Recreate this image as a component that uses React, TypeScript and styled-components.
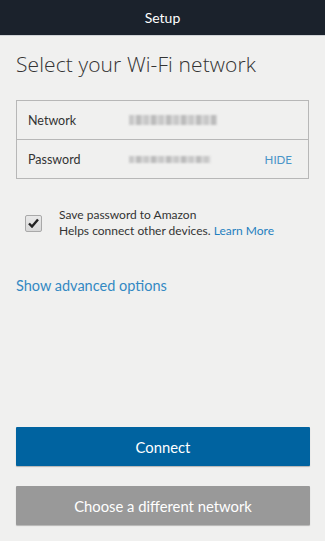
import React from 'react';
import styled, { createGlobalStyle } from 'styled-components';

const GlobalStyle = createGlobalStyle`
  html, body {
    margin: 0;
    padding: 0;
    background: #f0f0ef;
  }
  body {
    font-family: Lato, 'Open Sans', Arial, sans-serif;
    color: #333;
  }
`;

const Screen = styled.div`
  width: 325px;
  height: 541px;
  display: flex;
  flex-direction: column;
  background: #f0f0ef;
  overflow: hidden;
`;

const Header = styled.header`
  height: 35px;
  background: #1b222c;
  border-bottom: 1px solid #cfd2d6;
  display: flex;
  align-items: center;
  justify-content: center;
  color: #fff;
  font-size: 14px;
`;

const Content = styled.main`
  flex: 1;
  display: flex;
  flex-direction: column;
  padding: 0 16px 0 16px;
`;

const Title = styled.h1`
  margin: 14px 0 0;
  font-family: 'Open Sans', Lato, sans-serif;
  font-size: 21px;
  font-weight: 300;
  color: #333;
  letter-spacing: 0.1px;
`;

const Fields = styled.div`
  margin-top: 22px;
  border: 1px solid #b7b7b7;
  width: 293px;
  box-sizing: border-box;
`;

const FieldRow = styled.div<{ $last?: boolean }>`
  height: 38px;
  display: flex;
  align-items: center;
  padding: 0 16px 0 11px;
  border-bottom: ${(p) => (p.$last ? 'none' : '1px solid #b7b7b7')};
  font-size: 12.5px;
`;

const Label = styled.span`
  width: 101px;
  color: #333;
`;

const Masked = styled.span<{ $w: number; $h: number }>`
  width: ${(p) => p.$w}px;
  height: ${(p) => p.$h}px;
  background: repeating-linear-gradient(90deg, #c8c8c8 0 5px, #e2e2e2 5px 7px, #bcbcbc 7px 12px, #d6d6d6 12px 15px);
  filter: blur(0.8px);
`;

const Spacer = styled.span`
  flex: 1;
`;

const TextButton = styled.span`
  color: #4a95c8;
  font-size: 11.5px;
`;

const SaveRow = styled.label`
  margin-top: 28px;
  display: flex;
  align-items: center;
  gap: 17px;
  padding-left: 9px;
  font-size: 12px;
  line-height: 16px;
  color: #333;
`;

const Box = styled.span`
  width: 15px;
  height: 15px;
  border: 1px solid #a9a9a9;
  border-radius: 2px;
  background: linear-gradient(#e9e9e9, #d8d8d8);
  display: flex;
  align-items: center;
  justify-content: center;
`;

const Link = styled.a`
  color: #1f7fbf;
  text-decoration: none;
`;

const Advanced = styled.a`
  margin-top: 38px;
  color: #3389c3;
  font-size: 14.5px;
  text-decoration: none;
`;

const Buttons = styled.div`
  margin-top: auto;
  margin-bottom: 16px;
  display: flex;
  flex-direction: column;
  gap: 20px;
`;

const Button = styled.button<{ $primary?: boolean }>`
  width: 294px;
  height: 39px;
  border: none;
  border-radius: 1px;
  font-family: inherit;
  font-size: 14.8px;
  color: #fff;
  background: ${(p) => (p.$primary ? '#0063a0' : '#999999')};
  box-shadow: 0 1px 1px rgba(0, 0, 0, 0.25);
`;

export default function App() {
  return (
    <Screen>
      <GlobalStyle />
      <Header>Setup</Header>
      <Content>
        <Title>Select your Wi-Fi network</Title>
        <Fields>
          <FieldRow>
            <Label>Network</Label>
            <Masked $w={88} $h={10} />
          </FieldRow>
          <FieldRow $last>
            <Label>Password</Label>
            <Masked $w={82} $h={7} />
            <Spacer />
            <TextButton>HIDE</TextButton>
          </FieldRow>
        </Fields>
        <SaveRow>
          <Box>
            <svg width="11" height="10" viewBox="0 0 11 10">
              <path d="M1 5.5 L4 8.5 L10 1.5" fill="none" stroke="#222" strokeWidth="2.4" />
            </svg>
          </Box>
          <span>
            Save password to Amazon
            <br />
            Helps connect other devices. <Link>Learn More</Link>
          </span>
        </SaveRow>
        <Advanced>Show advanced options</Advanced>
        <Buttons>
          <Button $primary>Connect</Button>
          <Button>Choose a different network</Button>
        </Buttons>
      </Content>
    </Screen>
  );
}
